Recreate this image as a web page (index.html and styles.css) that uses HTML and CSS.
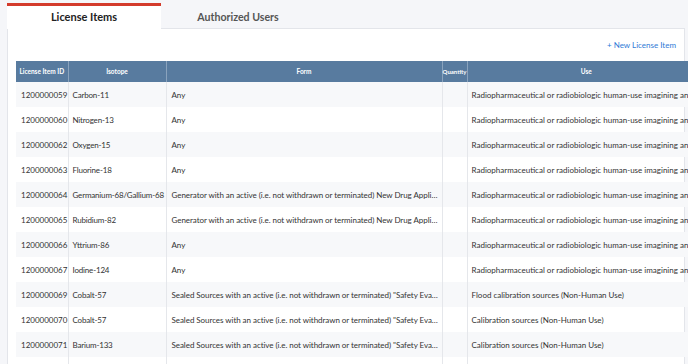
FILE: index.html
```html
<!DOCTYPE html>
<html lang="en">
<head>
    <meta charset="UTF-8">
    <title>License Items</title>
    <meta name="viewport" content="width=device-width, initial-scale=1.0">
    <link rel="stylesheet" href="styles.css">
</head>
<body>
    <div class="page">
        <div class="tabs">
            <div class="tab active">License Items</div>
            <div class="tab">Authorized Users</div>
        </div>
        <div class="panel">
            <div class="toolbar">
                <a class="new-link" href="#">+ New License Item</a>
            </div>
            <table class="items">
                <colgroup>
                    <col class="c-id">
                    <col class="c-iso">
                    <col class="c-form">
                    <col class="c-qty">
                    <col class="c-use">
                </colgroup>
                <thead>
                    <tr>
                        <th>License Item ID</th>
                        <th>Isotope</th>
                        <th>Form</th>
                        <th class="qty">Quantity</th>
                        <th>Use</th>
                    </tr>
                </thead>
                <tbody>
                    <tr>
                        <td>1200000059</td>
                        <td>Carbon-11</td>
                        <td>Any</td>
                        <td></td>
                        <td>Radiopharmaceutical or radiobiologic human-use imagining and localization studies</td>
                    </tr>
                    <tr>
                        <td>1200000060</td>
                        <td>Nitrogen-13</td>
                        <td>Any</td>
                        <td></td>
                        <td>Radiopharmaceutical or radiobiologic human-use imagining and localization studies</td>
                    </tr>
                    <tr>
                        <td>1200000062</td>
                        <td>Oxygen-15</td>
                        <td>Any</td>
                        <td></td>
                        <td>Radiopharmaceutical or radiobiologic human-use imagining and localization studies</td>
                    </tr>
                    <tr>
                        <td>1200000063</td>
                        <td>Fluorine-18</td>
                        <td>Any</td>
                        <td></td>
                        <td>Radiopharmaceutical or radiobiologic human-use imagining and localization studies</td>
                    </tr>
                    <tr>
                        <td>1200000064</td>
                        <td>Germanium-68/Gallium-68</td>
                        <td>Generator with an active (i.e. not withdrawn or terminated) New Drug Application (NDA)</td>
                        <td></td>
                        <td>Radiopharmaceutical or radiobiologic human-use imagining and localization studies</td>
                    </tr>
                    <tr>
                        <td>1200000065</td>
                        <td>Rubidium-82</td>
                        <td>Generator with an active (i.e. not withdrawn or terminated) New Drug Application (NDA)</td>
                        <td></td>
                        <td>Radiopharmaceutical or radiobiologic human-use imagining and localization studies</td>
                    </tr>
                    <tr>
                        <td>1200000066</td>
                        <td>Yttrium-86</td>
                        <td>Any</td>
                        <td></td>
                        <td>Radiopharmaceutical or radiobiologic human-use imagining and localization studies</td>
                    </tr>
                    <tr>
                        <td>1200000067</td>
                        <td>Iodine-124</td>
                        <td>Any</td>
                        <td></td>
                        <td>Radiopharmaceutical or radiobiologic human-use imagining and localization studies</td>
                    </tr>
                    <tr>
                        <td>1200000069</td>
                        <td>Cobalt-57</td>
                        <td>Sealed Sources with an active (i.e. not withdrawn or terminated) "Safety Evaluation of Sealed Source"</td>
                        <td></td>
                        <td>Flood calibration sources (Non-Human Use)</td>
                    </tr>
                    <tr>
                        <td>1200000070</td>
                        <td>Cobalt-57</td>
                        <td>Sealed Sources with an active (i.e. not withdrawn or terminated) "Safety Evaluation of Sealed Source"</td>
                        <td></td>
                        <td>Calibration sources (Non-Human Use)</td>
                    </tr>
                    <tr>
                        <td>1200000071</td>
                        <td>Barium-133</td>
                        <td>Sealed Sources with an active (i.e. not withdrawn or terminated) "Safety Evaluation of Sealed Source"</td>
                        <td></td>
                        <td>Calibration sources (Non-Human Use)</td>
                    </tr>
                    <tr>
                        <td></td>
                        <td></td>
                        <td></td>
                        <td></td>
                        <td></td>
                    </tr>
                </tbody>
            </table>
        </div>
    </div>
</body>
</html>
```

FILE: styles.css
```css
body {
    margin: 0;
    background: #f5f6f9;
    font-family: 'Lato', 'Liberation Sans', sans-serif;
    color: #333;
    overflow: hidden;
    height: 100vh;
}
.page {
    padding: 3px 3px 0 7px;
}
.tabs {
    display: flex;
}
.tab {
    width: 154px;
    height: 22px;
    line-height: 22px;
    border-top: 3px solid transparent;
    text-align: center;
    font-size: 11px;
    font-weight: 700;
    color: #555;
}
.tab + .tab {
    font-size: 10.6px;
}
.tab.active {
    background: #fff;
    border-top-color: #d33b2c;
    color: #222;
    height: 23px;
    margin-bottom: -1px;
    position: relative;
    z-index: 1;
}
.panel {
    background: #fff;
    border: 1px solid #e3e5ea;
    padding-left: 8px;
}
.toolbar {
    height: 32px;
    display: flex;
    align-items: center;
    justify-content: flex-end;
    padding-right: 8px;
}
.new-link {
    font-size: 8px;
    color: #2f7bd6;
    text-decoration: none;
}
.items {
    border-collapse: collapse;
    table-layout: fixed;
    width: 689px;
}
.c-id { width: 52px; }
.c-iso { width: 98px; }
.c-form { width: 276px; }
.c-qty { width: 25px; }
.c-use { width: 238px; }
.items th {
    height: 21px;
    padding: 0 2px;
    background: #587b9f;
    color: #fff;
    font-size: 6.5px;
    font-weight: 700;
    text-align: center;
    border-left: 1px solid #8aa3bd;
    white-space: nowrap;
    overflow: hidden;
}
.items th:first-child {
    border-left: none;
}
.items th.qty {
    padding: 0;
    font-size: 6px;
    overflow: visible;
}
.items td {
    height: 25px;
    padding: 0 3px 0 5px;
    font-size: 8px;
    color: #333;
    white-space: nowrap;
    overflow: hidden;
    text-overflow: ellipsis;
    border-left: 1px solid #e5e7eb;
    box-sizing: border-box;
}
.items td:first-child {
    border-left: none;
    padding-right: 0;
    text-overflow: clip;
}
.items td:nth-child(2) {
    padding: 0 0 0 4px;
    letter-spacing: -0.18px;
    text-overflow: clip;
}
.items td:nth-child(3) {
    letter-spacing: -0.05px;
}
.items td:nth-child(5) {
    padding-left: 4px;
    text-overflow: clip;
}
.items tbody tr:nth-child(odd) {
    background: #f7f8fa;
}
```
